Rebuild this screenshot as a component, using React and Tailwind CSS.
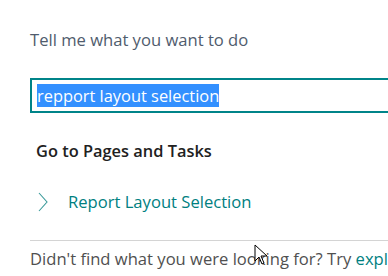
export default function App() {
  return (
    <div
      className="relative w-[388px] h-[276px] overflow-hidden bg-white"
      style={{ fontFamily: '"Open Sans", "Noto Sans", sans-serif' }}
    >
      <div className="w-[420px] pl-[30px] pt-[28px] flex flex-col">
        <div className="text-[16.6px] leading-[24px] text-[#505c6d]">Tell me what you want to do</div>
        <div className="mt-[26px] h-[35px] border-2 border-[#008489] flex items-center pl-[5px]">
          <span className="bg-[#3390ff] text-white text-[16.4px] leading-[23px]">repport layout selection</span>
        </div>
        <div className="mt-[27px] pl-[6px] text-[16.4px] leading-[22px] font-semibold text-[#212121]">Go to Pages and Tasks</div>
        <div className="mt-[28px] pl-[8px] flex items-center gap-[20px] text-[#00807f]">
          <svg width="10" height="20" viewBox="0 0 10 20" fill="none" stroke="#3a9a9a" strokeWidth="1.1">
            <path d="M1 1l8 9-8 9" />
          </svg>
          <span className="text-[16.6px] leading-[24px]">Report Layout Selection</span>
        </div>
        <div className="mt-[26px] h-px bg-[#d4d4d4]" />
        <div className="mt-[6px] whitespace-nowrap text-[16.6px] leading-[24px] text-[#505050]">
          Didn't find what you were looking for? Try <span className="text-[#00807f]">expl</span>
        </div>
      </div>
      <svg className="absolute left-[254px] top-[244px]" width="14" height="22" viewBox="0 0 14 22">
        <path d="M1 1v16l4-4 3 7 2-1-3-7h6z" fill="white" stroke="black" strokeWidth="1" strokeLinejoin="round" />
      </svg>
    </div>
  );
}
